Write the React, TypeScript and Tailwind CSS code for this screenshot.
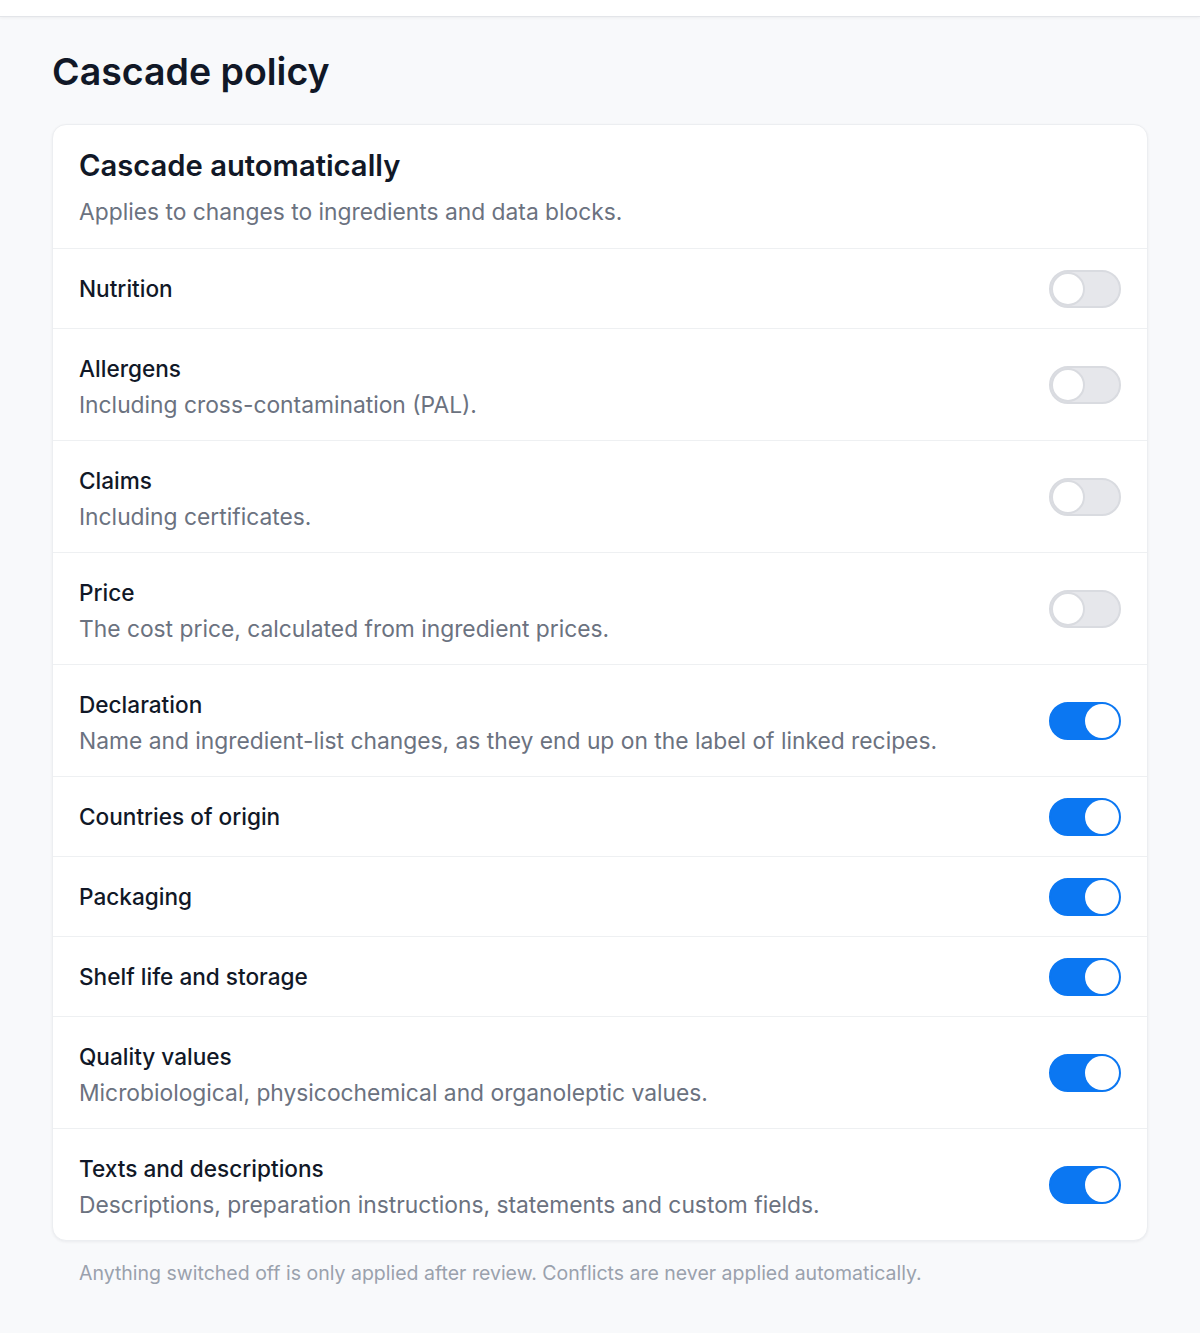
import { useState } from "react";

type Item = {
  label: string;
  description?: string;
  on: boolean;
};

const items: Item[] = [
  { label: "Nutrition", on: false },
  { label: "Allergens", description: "Including cross-contamination (PAL).", on: false },
  { label: "Claims", description: "Including certificates.", on: false },
  { label: "Price", description: "The cost price, calculated from ingredient prices.", on: false },
  {
    label: "Declaration",
    description: "Name and ingredient-list changes, as they end up on the label of linked recipes.",
    on: true,
  },
  { label: "Countries of origin", on: true },
  { label: "Packaging", on: true },
  { label: "Shelf life and storage", on: true },
  {
    label: "Quality values",
    description: "Microbiological, physicochemical and organoleptic values.",
    on: true,
  },
  {
    label: "Texts and descriptions",
    description: "Descriptions, preparation instructions, statements and custom fields.",
    on: true,
  },
];

function Toggle({ on, onChange }: { on: boolean; onChange: () => void }) {
  return (
    <button
      type="button"
      role="switch"
      aria-checked={on}
      onClick={onChange}
      className={
        on
          ? "relative flex h-[38px] w-[72px] shrink-0 items-center rounded-full border-2 border-[#0b77f2] bg-[#0b77f2] p-0"
          : "relative flex h-[38px] w-[72px] shrink-0 items-center rounded-full border-2 border-[#d9dbe0] bg-[#e6e7eb] p-0"
      }
    >
      <span
        className={
          on
            ? "ml-[34px] h-[34px] w-[34px] rounded-full bg-white"
            : "ml-0 h-[34px] w-[34px] rounded-full border-2 border-[#d9dbe0] bg-white"
        }
      />
    </button>
  );
}

export default function App() {
  const [state, setState] = useState(items.map((i) => i.on));

  return (
    <div
      className="min-h-[1333px] bg-[#f8f9fb] text-[#111827]"
      style={{ fontFamily: "Inter, 'Noto Sans', sans-serif" }}
    >
      <div className="h-[17px] border-b border-[#e3e5e9] bg-white shadow-[0_1px_3px_rgba(0,0,0,0.05)]" />

      <main className="px-[52px] pt-[35px]">
        <h1 className="text-[37.5px] font-semibold leading-[40px] text-[#111827]">Cascade policy</h1>

        <section className="mt-[32px] overflow-hidden rounded-[14px] border border-[#eceef1] bg-white shadow-[0_1px_3px_rgba(16,24,40,0.06)]">
          <div className="border-b border-[#eef0f2] px-[26px] pb-[18px] pt-[21px]">
            <h2 className="text-[29.2px] font-semibold leading-[40px] text-[#111827]">
              Cascade automatically
            </h2>
            <p className="mt-[8px] text-[22.8px] leading-[36px] text-[#6b7280]">
              Applies to changes to ingredients and data blocks.
            </p>
          </div>

          {items.map((item, idx) => (
            <div
              key={item.label}
              className="flex items-center justify-between gap-6 border-b border-[#eef0f2] px-[26px] py-[19px] last:border-b-0"
            >
              <div className="min-w-0">
                <div className="text-[22.6px] font-medium leading-[41px] text-[#111827]">{item.label}</div>
                {item.description && (
                  <div className="text-[22.8px] leading-[32px] text-[#6b7280]">{item.description}</div>
                )}
              </div>
              <Toggle
                on={state[idx]}
                onChange={() => setState((s) => s.map((v, i) => (i === idx ? !v : v)))}
              />
            </div>
          ))}
        </section>

        <p className="mt-[18px] px-[27px] text-[19.5px] leading-[28px] text-[#9aa1ad]">
          Anything switched off is only applied after review. Conflicts are never applied automatically.
        </p>
      </main>
    </div>
  );
}
